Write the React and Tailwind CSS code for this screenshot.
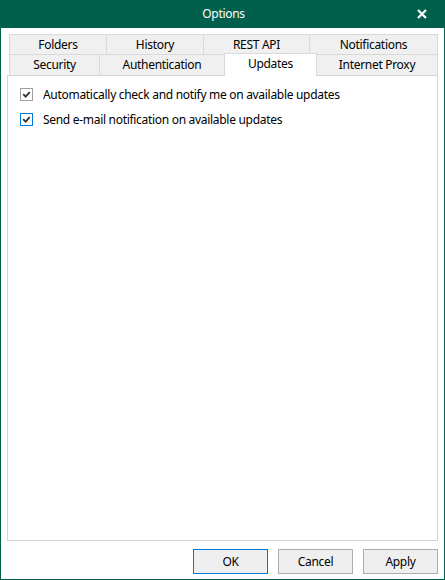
import React from "react";

const font = { fontFamily: '"Noto Sans", "Open Sans", sans-serif', letterSpacing: "-0.3px" };

function Check({ focused }) {
  return (
    <div
      className={`w-[13px] h-[13px] shrink-0 bg-white border ${
        focused ? "border-[#0078d7]" : "border-[#a0a0a0]"
      } flex items-center justify-center`}
    >
      <svg width="11" height="11" viewBox="0 0 11 11">
        <path d="M2.2 5.2 L4.6 7.6 L8.8 3.2" fill="none" stroke="#333" strokeWidth="1.8" />
      </svg>
    </div>
  );
}

function Tab({ w, children, cls = "" }) {
  return (
    <div
      className={`h-full flex items-center justify-center border-t border-[#d9d9d9] bg-[#f0f0f0] text-[12px] text-black ${cls}`}
      style={{ width: w }}
    >
      {children}
    </div>
  );
}

function Btn({ children, def }) {
  return (
    <div
      className={`w-[75px] h-[25px] flex items-center justify-center bg-[#efefef] border text-[12px] text-black ${
        def ? "border-[#0078d7]" : "border-[#adadad]"
      }`}
    >
      {children}
    </div>
  );
}

export default function App() {
  return (
    <div
      className="w-[445px] h-[580px] bg-white flex flex-col border-x border-b border-[#00604c] select-none"
      style={font}
    >
      <div className="h-[28px] shrink-0 bg-[#00604c] relative flex items-center justify-center -mx-px">
        <span className="text-white text-[12px] ml-[2px]">Options</span>
        <svg className="absolute left-[417px] top-[9px]" width="10" height="10" viewBox="0 0 10 10">
          <path d="M1 1 L9 9 M9 1 L1 9" stroke="#fff" strokeWidth="2.2" />
        </svg>
      </div>
      <div className="flex-1 flex flex-col px-[6px] pt-[6px] pb-[5px]">
        <div className="h-[20px] flex pl-[2px]">
          <Tab w="97px" cls="border-l">Folders</Tab>
          <Tab w="97px" cls="border-l">History</Tab>
          <Tab w="106px" cls="border-l">REST API</Tab>
          <Tab w="129px" cls="border-l border-r">Notifications</Tab>
        </div>
        <div className="h-[21px] flex items-start pl-[2px]">
          <Tab w="90px" cls="border-l">Security</Tab>
          <Tab w="125px" cls="border-l">Authentication</Tab>
          <div
            className="relative z-10 -mt-px h-[23px] w-[93px] flex items-center justify-center border-x border-t border-[#d9d9d9] bg-white text-[12px] text-black pb-[2px]"
          >
            Updates
          </div>
          <Tab w="121px" cls="border-r">Internet Proxy</Tab>
        </div>
        <div className="h-[466px] border border-[#d4d4d4] bg-white pt-[12px] pl-[12px] flex flex-col gap-[12px]">
          <div className="flex items-center gap-[10px] h-[13px]">
            <Check />
            <span className="text-[12px] text-black whitespace-nowrap">
              Automatically check and notify me on available updates
            </span>
          </div>
          <div className="flex items-center gap-[10px] h-[13px]">
            <Check focused />
            <span className="text-[12px] text-black whitespace-nowrap">
              Send e-mail notification on available updates
            </span>
          </div>
        </div>
        <div className="mt-[8px] flex justify-end gap-[10px]">
          <Btn def>OK</Btn>
          <Btn>Cancel</Btn>
          <Btn>Apply</Btn>
        </div>
      </div>
    </div>
  );
}
